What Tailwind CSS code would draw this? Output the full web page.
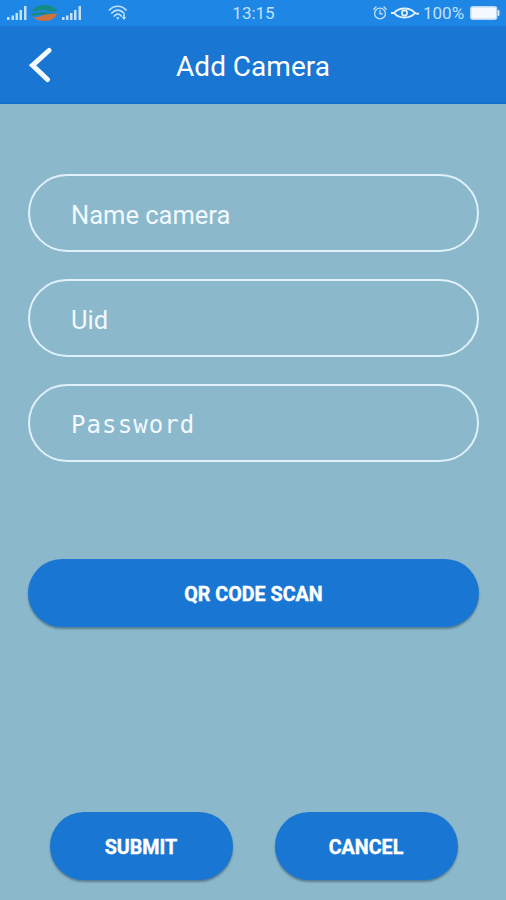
<!DOCTYPE html>
<html lang="en">

<head>
  <meta charset="UTF-8">
  <meta name="viewport" content="width=device-width, initial-scale=1.0">
  <title>Add Camera</title>
  <script src="https://cdn.jsdelivr.net/npm/@tailwindcss/browser@4"></script>
</head>

<body class="bg-[#8bb8cb] font-['Roboto',sans-serif] text-white">
  <div class="flex flex-col h-[900px] w-[506px] overflow-hidden">
    <!-- status bar -->
    <div class="grid grid-cols-[1fr_auto_1fr] items-center h-[26px] pl-[7px] pr-[6px] bg-[#1e86e5] text-[#c3e0fa]">
      <div class="flex items-center">
        <svg class="w-[20px] h-[14px] fill-current" viewBox="0 0 20 14"><path d="M0 11h2.500v3H0zM4.500 9.500H7V14H4.500zM8.500 7H11v7H8.500zM12.500 4H15v10h-2.500zM17 0h2.500v14H17z"/></svg>
        <svg class="w-[27px] h-[18px] ml-[4px]" viewBox="0 0 27 18"><path fill="#178b83" d="M1 7C4 2 9 1 14 1s10 2 12 6c-6 2-9-1-14-1S6 8 1 7zM0 9c5 1 7-1 12-1s7 3 14 1c-3 3-10 3-14 2S4 12 1 12z"/><path fill="#d0723f" d="M2 13c7 1 10-3 17-3 3 0 5 0 7-1-1 5-6 8-12 8-5 0-9-1-12-4z"/></svg>
        <svg class="w-[20px] h-[14px] ml-[4px] fill-current" viewBox="0 0 20 14"><path d="M0 11h2.500v3H0zM4 9.500h2.500V14H4zM8 7h2.500v7H8zM12 4h2.500v10H12zM16.500 0H19v14h-2.500z"/></svg>
        <svg class="w-[20px] h-[16px] ml-[26px]" viewBox="0 0 20 16" fill="none" stroke="currentColor" stroke-width="1.700" stroke-linecap="round"><path d="M1.500 5c4.500-5 12-5 16.500 0M3.800 8c3.500-3.800 8.500-3.800 12 0M6.300 11c2-2.400 5-2.400 7 0"/><path fill="currentColor" stroke="none" d="M8.200 12.600q1.600-1.200 3.200 0L9.800 15zM15.200 9h1.600v3h1.500L16 15l-2.300-3h1.500z"/></svg>
      </div>
      <div class="text-[17px] leading-none pt-[1px]">13:15</div>
      <div class="flex items-center justify-end">
        <svg class="w-[14px] h-[14px]" viewBox="0 0 14 14" fill="none" stroke="currentColor" stroke-width="1.300" stroke-linecap="round"><circle cx="7" cy="7.500" r="5.400"/><path d="M.8 3.200L3 1M13.200 3.200L11 1M7 4.500v3.300h2.500"/></svg>
        <svg class="w-[28px] h-[14px] ml-[4px] text-[#e4f2fd]" viewBox="0 0 28 14" fill="none" stroke="currentColor" stroke-width="1.900"><path d="M0 7h3c5-6 16-6 21 0 1 .8 2 .8 4 .8M3 7c5 6 16 6 21 0"/><circle cx="13.500" cy="7" r="2.600" stroke-width="1.700"/></svg>
        <div class="ml-[4px] w-[41px] text-[17px] leading-none pt-[1px] whitespace-nowrap">100%</div>
        <svg class="w-[30px] h-[14px] ml-[6px]" viewBox="0 0 30 14"><rect x=".7" y=".7" width="26" height="12.600" rx="2" fill="#f4f8ff" stroke="#b9d8f7" stroke-width="1.400"/><rect x="27.500" y="4" width="2" height="6" rx="1" fill="#d6e8fb"/></svg>
      </div>
    </div>

    <!-- title bar -->
    <div class="grid grid-cols-[1fr_auto_1fr] items-center h-[78px] px-[27px] bg-[#1976d2] border-b-2 border-[#1470cb]">
      <svg class="w-[26px] h-[38px]" viewBox="0 0 26 38" fill="none" stroke="#f5faff" stroke-width="5" stroke-linecap="round"><path d="M22 5.500L5.500 20.300l15 14.200"/></svg>
      <h1 class="text-[28px] leading-none pt-[6px]">Add Camera</h1>
    </div>

    <!-- camera details -->
    <div class="flex flex-col gap-[27px] px-7 pt-[70px] w-[507px]">
      <div class="flex items-center h-[78px] rounded-full border-2 border-[#e0f1fb] pl-[41px] pt-[4px] text-[25.500px] text-[#f2f9ff]">Name camera</div>
      <div class="flex items-center h-[78px] rounded-full border-2 border-[#e0f1fb] pl-[41px] pt-[4px] text-[25.500px] text-[#f2f9ff]">Uid</div>
      <div class="flex items-center h-[78px] rounded-full border-2 border-[#e0f1fb] pl-[41px] pt-[3px] font-['DejaVu_Sans_Mono',monospace] text-[24px] tracking-[1.1px] text-[#f2f9ff]">Password</div>
    </div>

    <div class="flex px-7 pt-[97px] w-[507px]">
      <button class="flex-grow h-[68px] rounded-full bg-[#1976d2] shadow-[0_2px_2px_rgba(40,70,90,0.5)] pt-[3px] text-[19.700px] font-bold [-webkit-text-stroke:0.4px_white]">QR CODE SCAN</button>
    </div>

    <div class="flex gap-[42px] mt-auto ml-[49.500px] mb-[20px]">
      <button class="w-[183px] h-[68px] rounded-full bg-[#1976d2] shadow-[0_2px_2px_rgba(40,70,90,0.5)] pt-[3px] text-[19.700px] font-bold [-webkit-text-stroke:0.4px_white]">SUBMIT</button>
      <button class="w-[183px] h-[68px] rounded-full bg-[#1976d2] shadow-[0_2px_2px_rgba(40,70,90,0.5)] pt-[3px] text-[19.700px] font-bold [-webkit-text-stroke:0.4px_white]">CANCEL</button>
    </div>
  </div>
</body>

</html>
